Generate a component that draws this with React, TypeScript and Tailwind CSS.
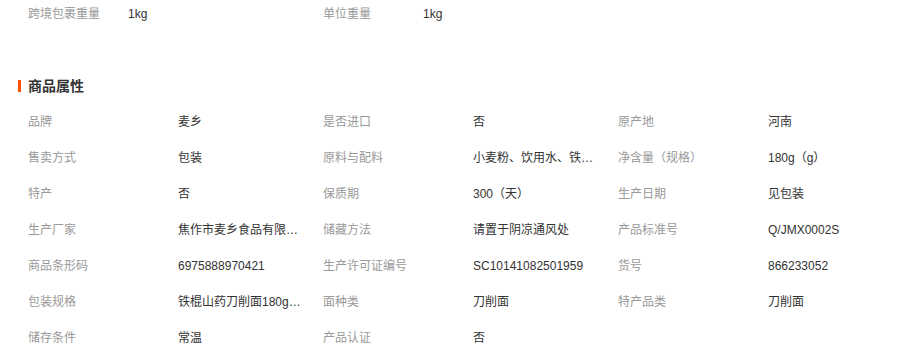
const topRow = [
  { label: '跨境包裹重量', value: '1kg' },
  { label: '单位重量', value: '1kg' },
];

const props = [
  ['品牌', '麦乡'],
  ['是否进口', '否'],
  ['原产地', '河南'],
  ['售卖方式', '包装'],
  ['原料与配料', '小麦粉、饮用水、铁棍山药粉、食用盐'],
  ['净含量（规格）', '180g（g）'],
  ['特产', '否'],
  ['保质期', '300（天）'],
  ['生产日期', '见包装'],
  ['生产厂家', '焦作市麦乡食品有限公司'],
  ['储藏方法', '请置于阴凉通风处'],
  ['产品标准号', 'Q/JMX0002S'],
  ['商品条形码', '6975888970421'],
  ['生产许可证编号', 'SC10141082501959'],
  ['货号', '866233052'],
  ['包装规格', '铁棍山药刀削面180g*3袋'],
  ['面种类', '刀削面'],
  ['特产品类', '刀削面'],
  ['储存条件', '常温'],
  ['产品认证', '否'],
];

export default function App() {
  return (
    <div
      className="w-[922px] h-[359px] overflow-hidden bg-white text-[12px]"
      style={{ fontFamily: '"Liberation Sans", "Noto Sans CJK SC", sans-serif' }}
    >
      {/* Top row */}
      <div className="flex h-7 items-center pl-[28px]">
        {topRow.map((item) => (
          <div key={item.label} className="flex w-[295px] items-center">
            <span className="w-[100px] text-[#999]">{item.label}</span>
            <span className="text-[#333]">{item.value}</span>
          </div>
        ))}
      </div>

      {/* Section heading */}
      <div className="mt-[48px] flex h-5 items-center pl-[18px]">
        <span className="h-[12px] w-[3px] bg-[#ff5000]" />
        <h3 className="ml-[7px] text-[14px] font-bold text-[#333]">商品属性</h3>
      </div>

      {/* Property grid */}
      <div className="mt-2 grid grid-cols-[295px_295px_295px] pl-[28px]">
        {props.map(([label, value]) => (
          <div key={label} className="flex h-9 items-center">
            <span className="w-[150px] shrink-0 text-[#999]">{label}</span>
            <span className="w-[126px] truncate text-[#333]">{value}</span>
          </div>
        ))}
      </div>
    </div>
  );
}
